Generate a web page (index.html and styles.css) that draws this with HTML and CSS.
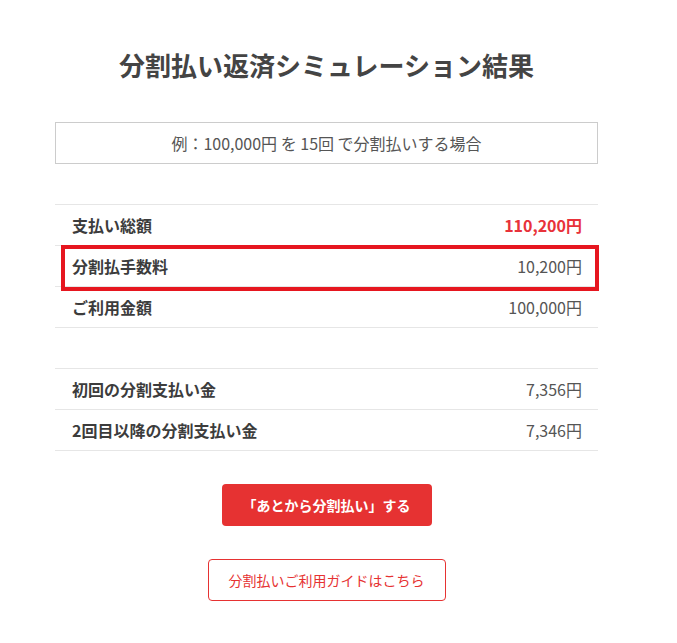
FILE: index.html
```html
<!DOCTYPE html>
<html lang="ja">
<head>
<meta charset="utf-8">
<title>分割払い返済シミュレーション結果</title>
<link rel="stylesheet" href="styles.css">
</head>
<body>
<main class="sim">
  <h1 class="sim-title">分割払い返済シミュレーション結果</h1>
  <div class="sim-example">例：100,000円 を 15回 で分割払いする場合</div>

  <dl class="sim-table">
    <div class="sim-row">
      <dt class="sim-label">支払い総額</dt>
      <dd class="sim-value sim-value--total">110,200円</dd>
    </div>
    <div class="sim-row sim-row--marked">
      <dt class="sim-label">分割払手数料</dt>
      <dd class="sim-value">10,200円</dd>
    </div>
    <div class="sim-row">
      <dt class="sim-label">ご利用金額</dt>
      <dd class="sim-value">100,000円</dd>
    </div>
  </dl>

  <dl class="sim-table sim-table--second">
    <div class="sim-row">
      <dt class="sim-label">初回の分割支払い金</dt>
      <dd class="sim-value">7,356円</dd>
    </div>
    <div class="sim-row">
      <dt class="sim-label">2回目以降の分割支払い金</dt>
      <dd class="sim-value">7,346円</dd>
    </div>
  </dl>

  <div class="sim-actions">
    <a class="btn btn--primary" href="#">「あとから分割払い」する</a>
    <a class="btn btn--outline" href="#">分割払いご利用ガイドはこちら</a>
  </div>
</main>
</body>
</html>
```

FILE: styles.css
```css
* { box-sizing: border-box; }

html, body {
  margin: 0;
  padding: 0;
  background: #ffffff;
}

body {
  font-family: "Noto Sans CJK JP", "Noto Sans", sans-serif;
  color: #333333;
}

.sim {
  width: 543px;
  margin-left: 55px;
  padding-top: 46px;
}

.sim-title {
  margin: 0;
  font-size: 26px;
  line-height: 38px;
  font-weight: 700;
  color: #444444;
  text-align: center;
}

.sim-example {
  margin-top: 38px;
  height: 42px;
  border: 1px solid #cccccc;
  display: flex;
  align-items: center;
  justify-content: center;
  font-size: 16px;
  color: #555555;
}

.sim-table {
  margin: 40px 0 0 0;
  border-top: 1px solid #e6e6e6;
}

.sim-table--second {
  margin-top: 40px;
}

.sim-row {
  position: relative;
  height: 41px;
  border-bottom: 1px solid #e6e6e6;
  display: flex;
  align-items: center;
  justify-content: space-between;
  padding: 0 16px 0 17px;
}

.sim-row--marked::after {
  content: "";
  position: absolute;
  left: 6px;
  right: -1px;
  top: -1px;
  bottom: -5px;
  border: 4px solid #e6161f;
  pointer-events: none;
}

.sim-label {
  margin: 0;
  font-size: 16px;
  font-weight: 700;
  color: #3c3c3c;
}

.sim-value {
  margin: 0;
  font-size: 16px;
  color: #555555;
}

.sim-value--total {
  font-weight: 700;
  color: #e8323a;
}

.sim-actions {
  margin-top: 33px;
  display: flex;
  flex-direction: column;
  align-items: center;
  gap: 33px;
}

.btn {
  display: flex;
  align-items: center;
  justify-content: center;
  height: 42px;
  border-radius: 4px;
  font-size: 14px;
  text-decoration: none;
}

.btn--primary {
  width: 210px;
  background: #e63232;
  color: #ffffff;
  font-weight: 700;
}

.btn--outline {
  width: 238px;
  background: #ffffff;
  border: 1px solid #e63232;
  color: #e63232;
}
```
